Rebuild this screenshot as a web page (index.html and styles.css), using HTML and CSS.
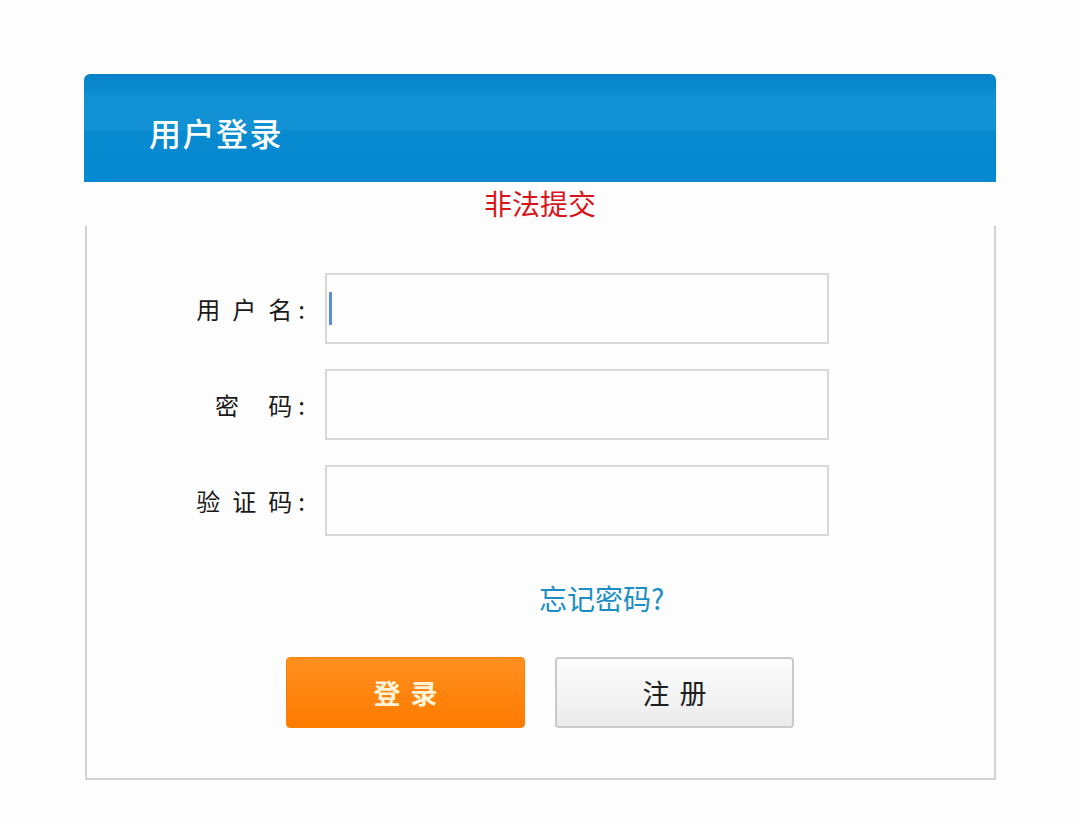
FILE: index.html
```html
<!DOCTYPE html>
<html lang="zh-CN">
<head>
<meta charset="utf-8">
<title>用户登录</title>
<link rel="stylesheet" href="styles.css">
</head>
<body>
<div class="page">
  <div class="panel">
    <div class="panel-head"><h1 class="panel-title">用户登录</h1></div>
    <div class="msg">非法提交</div>
    <form class="panel-body">
      <div class="rows">
        <div class="row">
          <label class="label"><span class="sp">用户</span><span class="last">名</span>:</label>
          <div class="field"><input class="input" type="text"><span class="caret"></span></div>
        </div>
        <div class="row">
          <label class="label"><span class="sp">密 </span><span class="last">码</span>:</label>
          <div class="field"><input class="input" type="password"></div>
        </div>
        <div class="row">
          <label class="label"><span class="sp">验证</span><span class="last">码</span>:</label>
          <div class="field"><input class="input" type="text"></div>
        </div>
      </div>
      <div class="forgot-line"><a class="forgot" href="#">忘记密码?</a></div>
      <div class="actions">
        <button class="btn btn-login" type="button">登录</button>
        <button class="btn btn-reg" type="button">注册</button>
      </div>
    </form>
  </div>
</div>
</body>
</html>
```

FILE: styles.css
```css
* { box-sizing: border-box; }
html, body { margin: 0; padding: 0; }
body {
  background: #fdfdfd;
  font-family: "Noto Sans CJK SC", "Noto Sans", sans-serif;
  color: #222;
}
.page {
  padding-top: 74px;
  padding-left: 84px;
}
.panel {
  width: 912px;
}
.panel-head {
  height: 108px;
  border-radius: 6px 6px 0 0;
  background: linear-gradient(to bottom, #0783c8 0px, #0b8acf 16px, #1391d5 26px, #1391d5 56px, #078ad0 57px, #0689d0 108px);
  display: flex;
  align-items: center;
  padding-left: 65px;
  padding-top: 8px;
}
.panel-title {
  margin: 0;
  font-size: 32px;
  font-weight: 500;
  color: #fff;
  line-height: 1;
  letter-spacing: 1.5px;
}
.msg {
  height: 44px;
  display: flex;
  align-items: center;
  justify-content: center;
  color: #d7141a;
  font-size: 28px;
  line-height: 1;
  padding-bottom: 2px;
}
.panel-body {
  margin: 0 0 0 1px;
  width: 911px;
  border: 2px solid #d2d2d2;
  border-top: none;
  padding: 47px 0 50px;
}
.rows {
  display: flex;
  flex-direction: column;
  gap: 25px;
}
.row {
  display: flex;
  align-items: center;
}
.label {
  width: 238px;
  text-align: right;
  padding-right: 20px;
  font-size: 24px;
  color: #1a1a1a;
  white-space: pre;
  line-height: 1;
}
.label .sp {
  letter-spacing: 12px;
}
.label .last {
  letter-spacing: 6px;
}
.field {
  position: relative;
  width: 504px;
  height: 71px;
}
.input {
  width: 100%;
  height: 100%;
  border: 2px solid #d8d8d8;
  background: #fdfdfd;
  outline: none;
  padding: 0 10px;
  font-size: 24px;
}
.caret {
  position: absolute;
  left: 4px;
  top: 19px;
  width: 3px;
  height: 33px;
  background: #5a8fd8;
}
.forgot-line {
  margin-top: 44px;
  padding-left: 452px;
  line-height: 36px;
  height: 36px;
}
.forgot {
  color: #1b8ec4;
  font-size: 28px;
  text-decoration: none;
}
.actions {
  margin-top: 41px;
  display: flex;
  justify-content: center;
  gap: 30px;
  padding-right: 1px;
}
.btn {
  width: 239px;
  height: 71px;
  border-radius: 4px;
  font-family: inherit;
  font-size: 27px;
  letter-spacing: 10px;
  padding: 0 0 0 10px;
  cursor: pointer;
  line-height: 1;
}
.btn-login {
  background: linear-gradient(to bottom, #ff901f, #ff7a00);
  border: 1px solid #f58200;
  color: #fff4d8;
  font-weight: 700;
}
.btn-reg {
  background: linear-gradient(to bottom, #fdfdfd, #ebebeb);
  border: 2px solid #cacaca;
  color: #1e1e1e;
}
```
